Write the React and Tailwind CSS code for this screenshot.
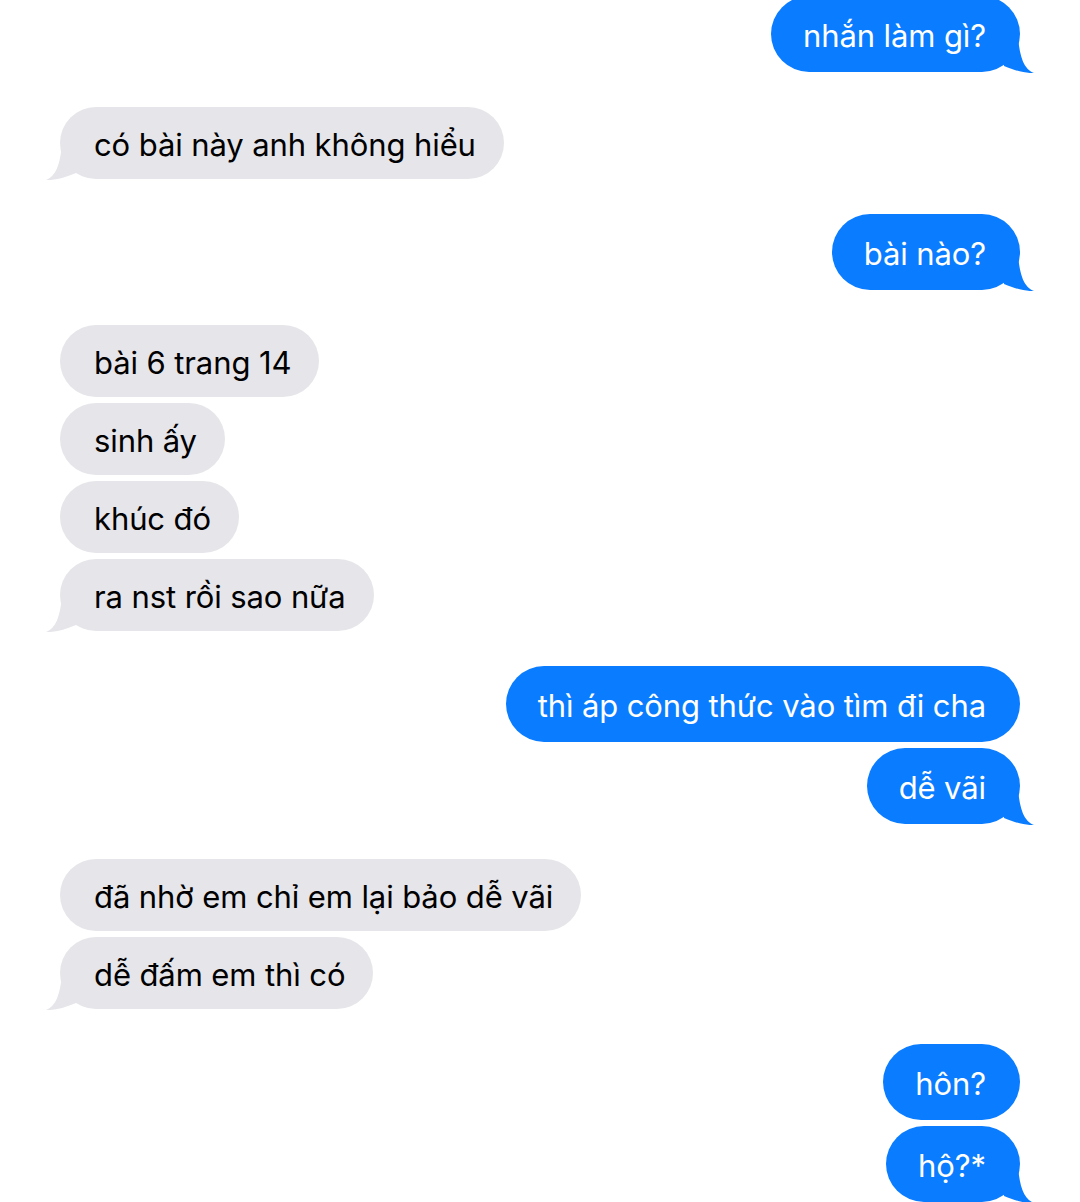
import React from 'react'

const thread = [
  { from: 'me', texts: ['nhắn làm gì?'] },
  { from: 'them', texts: ['có bài này anh không hiểu'] },
  { from: 'me', texts: ['bài nào?'] },
  { from: 'them', texts: ['bài 6 trang 14', 'sinh ấy', 'khúc đó', 'ra nst rồi sao nữa'] },
  { from: 'me', texts: ['thì áp công thức vào tìm đi cha', 'dễ vãi'] },
  { from: 'them', texts: ['đã nhờ em chỉ em lại bảo dễ vãi', 'dễ đấm em thì có'] },
  { from: 'me', texts: ['hôn?', 'hộ?*'] },
]

function Tail({ mine }) {
  if (mine) {
    return (
      <svg
        className="absolute right-[-14px] bottom-[-1px] w-[30px] h-[36px]"
        viewBox="-16 -35 30 36"
      >
        <path d="M -2 -35 C 0 -14 4 -3 14 1 C 6 1.5 -4 -1 -16 -6 L -16 -35 Z" fill="#0a7cff" />
      </svg>
    )
  }
  return (
    <svg
      className="absolute left-[-14px] bottom-[-1px] w-[30px] h-[36px]"
      viewBox="-14 -35 30 36"
    >
      <path d="M 2 -35 C 0 -14 -4 -3 -14 1 C -6 1.5 4 -1 16 -6 L 16 -35 Z" fill="#e5e5ea" />
    </svg>
  )
}

function Bubble({ text, mine, tail }) {
  return (
    <div
      className={
        mine
          ? 'relative h-[76px] flex items-center pt-[5px] pl-8 pr-[34px] rounded-full bg-[#0a7cff] text-white'
          : 'relative h-[72px] flex items-center pt-[5px] pl-[34px] pr-[28px] rounded-full bg-[#e5e5ea] text-black'
      }
    >
      {tail && <Tail mine={mine} />}
      <span className="relative whitespace-nowrap">{text}</span>
    </div>
  )
}

export default function App() {
  return (
    <div
      className="w-[1080px] h-[1202px] overflow-hidden bg-white"
      style={{ fontFamily: 'Inter, "Noto Sans", sans-serif' }}
    >
      <div className="flex flex-col gap-[35px] px-[60px] -mt-1 text-[31px] tracking-[-0.1px]">
        {thread.map((group, gi) => {
          const mine = group.from === 'me'
          return (
            <div key={gi} className={mine ? 'flex flex-col items-end gap-[6px]' : 'flex flex-col items-start gap-[6px]'}>
              {group.texts.map((t, i) => (
                <Bubble key={i} text={t} mine={mine} tail={i === group.texts.length - 1} />
              ))}
            </div>
          )
        })}
      </div>
    </div>
  )
}
